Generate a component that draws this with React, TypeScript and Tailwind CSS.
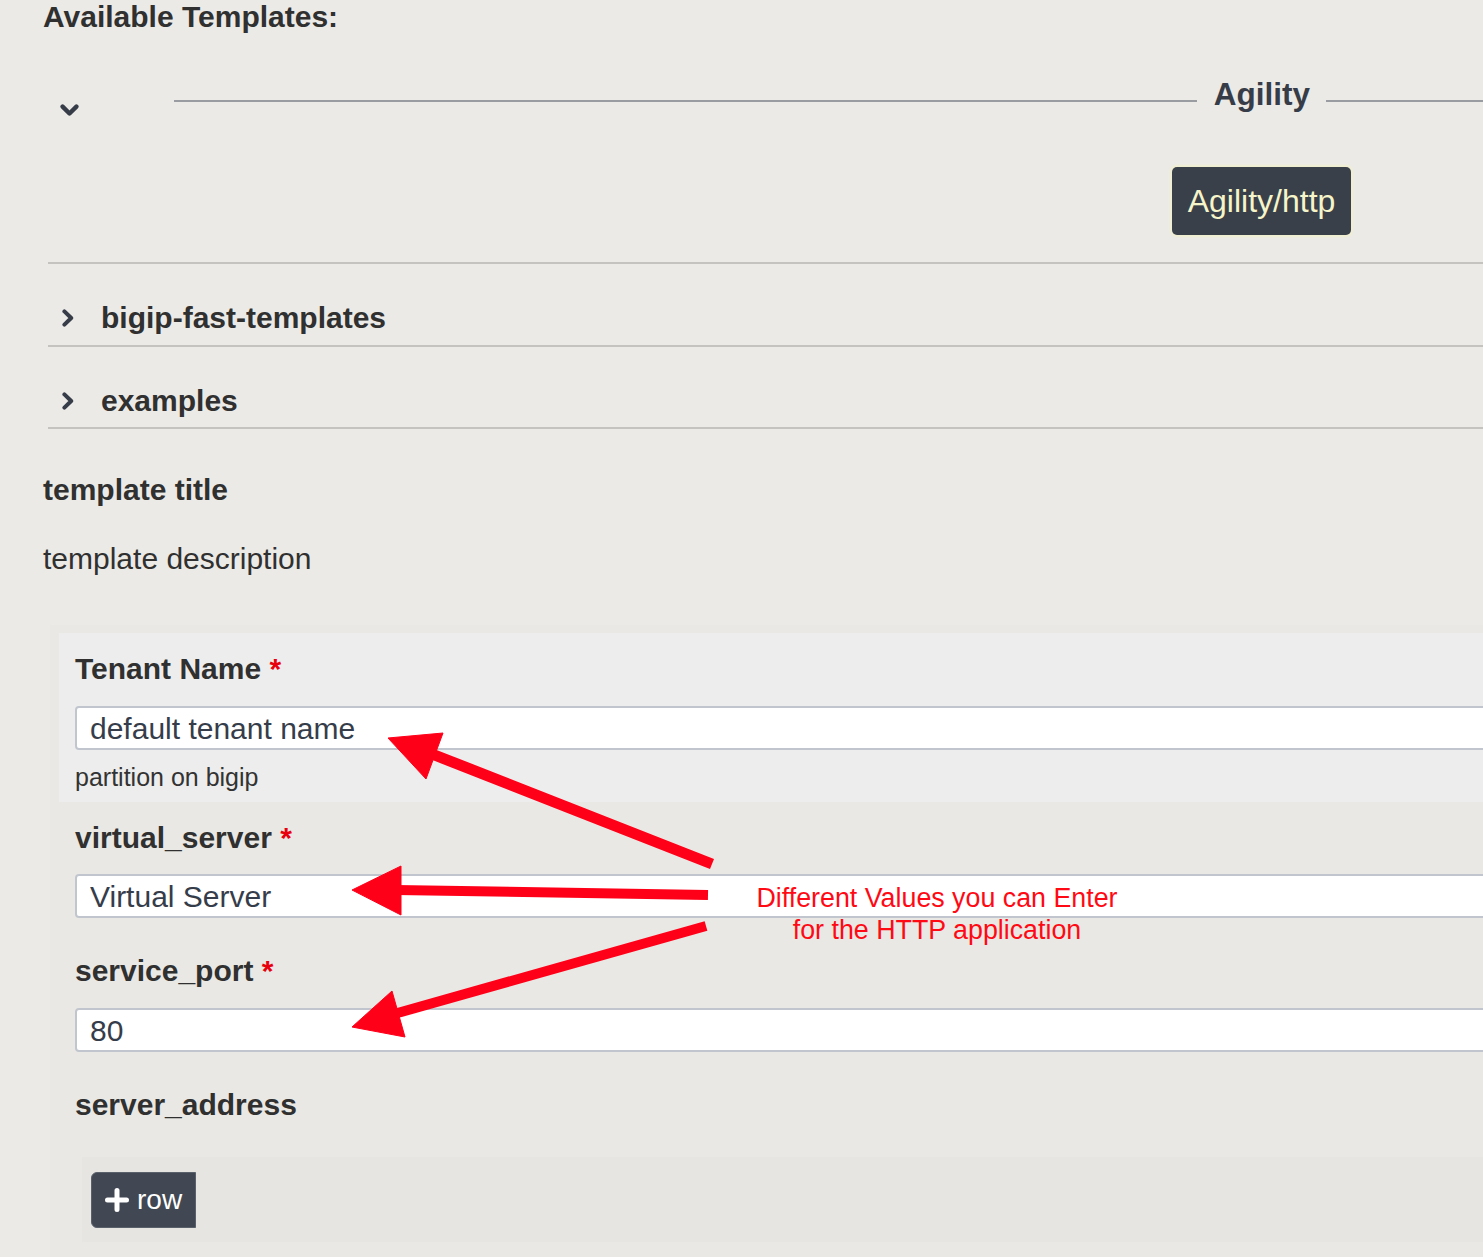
import React from "react";

const ChevronDown = () => (
  <svg width="19" height="13" viewBox="0 0 19 13" className="block">
    <polyline
      points="2.6,2.6 9.5,9.5 16.4,2.6"
      fill="none"
      stroke="#363d48"
      strokeWidth="4.4"
      strokeLinecap="round"
      strokeLinejoin="round"
    />
  </svg>
);

const ChevronRight = () => (
  <svg width="12" height="18" viewBox="0 0 12 18" className="block">
    <polyline
      points="2.4,2.4 9.2,9 2.4,15.6"
      fill="none"
      stroke="#363d48"
      strokeWidth="4"
      strokeLinecap="round"
      strokeLinejoin="round"
    />
  </svg>
);

const Divider = () => <div className="h-[2px] bg-[#c4c3c0]" />;

const Required = ({ label }: { label: string }) => (
  <div className="text-[30px] leading-[34px] font-bold text-[#303030]">
    {label} <span className="text-[#e8000d]">*</span>
  </div>
);

const TextInput = ({ value }: { value: string }) => (
  <input
    readOnly
    value={value}
    className="block w-full h-[44px] bg-white border-2 border-[#c1c5cd] rounded-[4px] pl-[13px] text-[30px] text-[#363d4a] outline-none font-['Liberation_Sans',Arial,sans-serif]"
  />
);

const Arrows = () => (
  <svg
    width="1483"
    height="1257"
    viewBox="0 0 1483 1257"
    className="absolute left-0 top-0 pointer-events-none"
  >
    <g fill="#ff0019" stroke="#ff0019">
      <line x1="712" y1="864" x2="432" y2="754" strokeWidth="11" />
      <polygon points="388,738 443,733 426,779" strokeWidth="1" />
      <line x1="708" y1="895" x2="396" y2="890" strokeWidth="10" />
      <polygon points="352,890 401,866 401,915" strokeWidth="1" />
      <line x1="706" y1="926" x2="394" y2="1014" strokeWidth="10" />
      <polygon points="352,1027 392,991 405,1037" strokeWidth="1" />
    </g>
  </svg>
);

export default function App() {
  return (
    <div className="relative w-[1483px] h-[1257px] overflow-hidden bg-[#ebeae6] text-[#303030] font-['Liberation_Sans',Arial,sans-serif]">
      <h2 className="pl-[43px] text-[30px] leading-[34px] font-bold">
        Available Templates:
      </h2>

      {/* template list */}
      <div className="ml-[48px] mt-[36px]">
        <div className="flex items-start h-[50px]">
          <div className="ml-[12px] mt-[34px]">
            <ChevronDown />
          </div>
          <div className="flex-1 ml-[95px] mt-[30px] h-[2px] bg-[#999ca1]" />
          <div className="ml-[17px] mt-[6px] text-[31.5px] leading-[36px] font-bold text-[#373d48]">
            Agility
          </div>
          <div className="w-[157px] ml-[16px] mt-[30px] h-[2px] bg-[#999ca1]" />
        </div>
        <div className="flex justify-end mr-[132px] mt-[47px]">
          <button className="w-[179px] h-[68px] rounded-[5px] bg-[#39404a] text-[#f6f4c9] text-[32px] shadow-[0_0_2px_2px_#f1efd0]">
            Agility/http
          </button>
        </div>
        <div className="mt-[27px]">
          <Divider />
        </div>
        <div className="flex items-center pt-[37px] pb-[10px]">
          <div className="ml-[14px] w-[39px]">
            <ChevronRight />
          </div>
          <span className="text-[30px] leading-[34px] font-bold">
            bigip-fast-templates
          </span>
        </div>
        <Divider />
        <div className="flex items-center pt-[37px] pb-[9px]">
          <div className="ml-[14px] w-[39px]">
            <ChevronRight />
          </div>
          <span className="text-[30px] leading-[34px] font-bold">examples</span>
        </div>
        <Divider />
      </div>

      <div className="pl-[43px] mt-[44px] text-[30px] leading-[34px] font-bold">
        template title
      </div>
      <div className="pl-[43px] mt-[35px] text-[30px] leading-[34px]">
        template description
      </div>

      {/* form */}
      <div className="ml-[50px] mt-[49px] w-[1480px] bg-[#e9e8e4] pl-[9px] pt-[8px] pb-[20px]">
        <div className="bg-[#ededed] px-[16px] pt-[19px] pb-[10px]">
          <Required label="Tenant Name" />
          <div className="mt-[20px]">
            <TextInput value="default tenant name" />
          </div>
          <div className="mt-[12px] text-[25px] leading-[30px] text-[#333]">
            partition on bigip
          </div>
        </div>

        <div className="px-[16px] pt-[19px]">
          <Required label="virtual_server" />
          <div className="mt-[19px]">
            <TextInput value="Virtual Server" />
          </div>
        </div>

        <div className="px-[16px] pt-[36px]">
          <Required label="service_port" />
          <div className="mt-[20px]">
            <TextInput value="80" />
          </div>
        </div>

        <div className="px-[16px] pt-[36px]">
          <div className="text-[30px] leading-[34px] font-bold">server_address</div>
        </div>

        <div className="ml-[23px] mt-[35px] bg-[#e6e5e2] pl-[9px] pt-[15px] pb-[14px]">
          <button className="flex items-center h-[56px] w-[105px] rounded-l-[6px] bg-[#414854] border border-[#5a616b] pl-[13px] text-white">
            <svg width="24" height="24" viewBox="0 0 24 24" className="block">
              <path
                d="M12 2.5v19M2.5 12h19"
                stroke="#fff"
                strokeWidth="5"
                strokeLinecap="round"
              />
            </svg>
            <span className="ml-[8px] text-[28px] leading-[32px]">row</span>
          </button>
        </div>
      </div>

      <Arrows />
      <div className="absolute left-[737px] top-[882px] w-[400px] text-center text-[26.8px] leading-[32px] text-[#ff0a14]">
        Different Values you can Enter
        <br />
        for the HTTP application
      </div>
    </div>
  );
}
